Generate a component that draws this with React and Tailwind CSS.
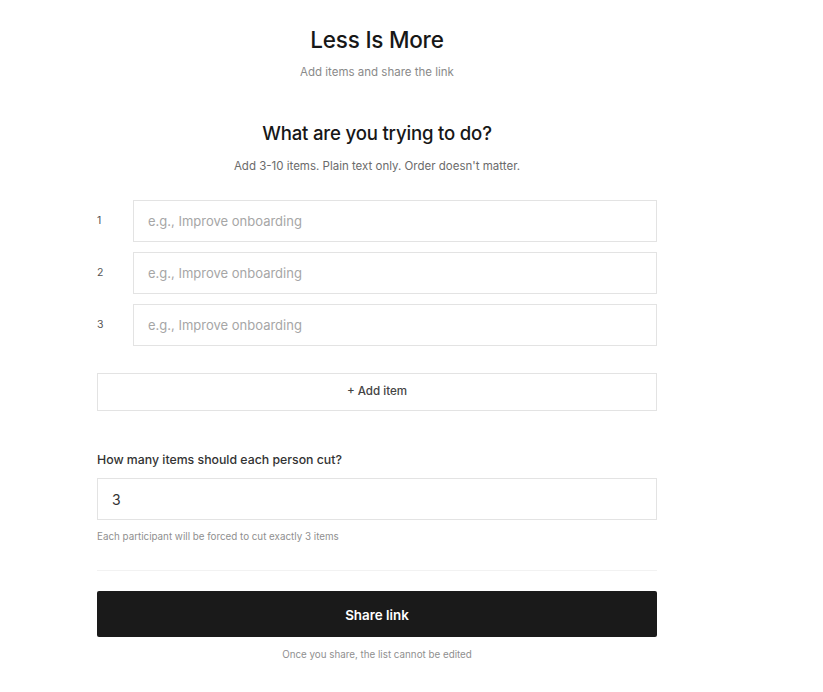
import React, { useState } from "react";

export default function App() {
  const [items, setItems] = useState(["", "", ""]);
  const [cut, setCut] = useState("3");

  return (
    <div className="min-h-screen bg-white text-[#171717]" style={{ fontFamily: "Inter, 'Noto Sans', sans-serif" }}>
      <div className="w-[754px]">
        <div className="mx-auto w-[560px] pt-[24px] pb-10">
          {/* Header */}
          <h1 className="text-center text-[22.5px] leading-8 font-medium tracking-[-0.01em]">Less Is More</h1>
          <p className="mt-2 text-center text-[11.5px] leading-4 text-[#8a8a8a]">Add items and share the link</p>

          {/* Items */}
          <h2 className="mt-[39px] text-center text-[18.6px] leading-7 font-medium tracking-[-0.01em]">What are you trying to do?</h2>
          <p className="mt-[9px] text-center text-[11.5px] leading-5 text-[#6b6b6b]">
            Add 3-10 items. Plain text only. Order doesn't matter.
          </p>

          <div className="mt-[24px] flex flex-col gap-[10px]">
            {items.map((val, i) => (
              <div key={i} className="flex items-center">
                <span className="w-9 text-[10.5px] text-[#555]">{i + 1}</span>
                <input
                  value={val}
                  onChange={(e) => {
                    const next = [...items];
                    next[i] = e.target.value;
                    setItems(next);
                  }}
                  placeholder="e.g., Improve onboarding"
                  className="h-[42px] flex-1 border border-[#e3e3e3] px-[14px] text-[13px] text-[#171717] placeholder:text-[#a6a6a6] outline-none"
                />
              </div>
            ))}
          </div>

          <button
            onClick={() => setItems([...items, ""])}
            className="mt-[27px] h-[38px] w-full border border-[#e3e3e3] text-[11.6px] font-medium text-[#444]"
          >
            + Add item
          </button>

          {/* Cut count */}
          <label className="mt-[39px] block text-[12.3px] leading-5 font-medium text-[#333]">
            How many items should each person cut?
          </label>
          <input
            value={cut}
            onChange={(e) => setCut(e.target.value)}
            className="mt-2 h-[42px] w-full border border-[#e3e3e3] px-[14px] text-sm text-[#333] outline-none"
          />
          <p className="mt-[9px] text-[9.8px] leading-4 text-[#8f8f8f]">
            Each participant will be forced to cut exactly {cut} items
          </p>

          <div className="mt-[25px] border-t border-[#f2f2f2]" />

          <button className="mt-5 h-[46px] w-full rounded-[2px] bg-[#1a1a1a] pt-[3px] text-[13.4px] font-semibold text-white">
            Share link
          </button>
          <p className="mt-[10px] text-center text-[9.8px] leading-4 text-[#8f8f8f]">
            Once you share, the list cannot be edited
          </p>
        </div>
      </div>
    </div>
  );
}
